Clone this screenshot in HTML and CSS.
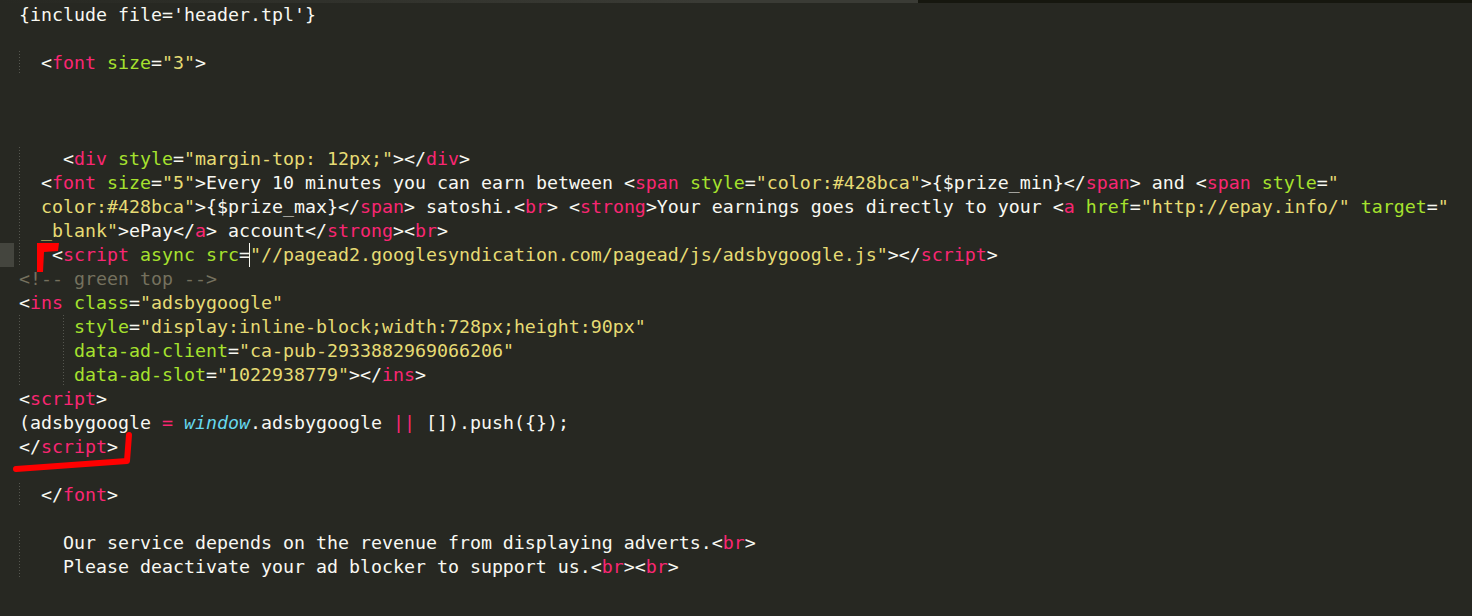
FILE: index.html
```html
<!DOCTYPE html>
<html>
<head>
<meta charset="utf-8">
<link rel="stylesheet" href="styles.css">
</head>
<body>
<div class="editor">
  <div class="topstrip"><div class="tab-edge"></div><div class="tab-dark"></div></div>
  <div class="view">
    <div class="gutter">
      <div class="gl"></div><div class="gl"></div><div class="gl"></div><div class="gl"></div><div class="gl"></div>
      <div class="gl"></div><div class="gl"></div><div class="gl"></div><div class="gl"></div><div class="gl"></div>
      <div class="gl cur"></div><div class="gl"></div><div class="gl"></div><div class="gl"></div><div class="gl"></div>
    </div>
    <div class="code">
<div class="ln">{include file='header.tpl'}</div>
<div class="ln"><span class="g"></span></div>
<div class="ln"><span class="g">  </span>&lt;<span class="t">font</span> <span class="a">size</span>=<span class="s">"3"</span>&gt;</div>
<div class="ln"><span class="g"></span></div>
<div class="ln"><span class="g"></span></div>
<div class="ln"><span class="g"></span></div>
<div class="ln"><span class="g">    </span>&lt;<span class="t">div</span> <span class="a">style</span>=<span class="s">"margin-top: 12px;"</span>&gt;&lt;/<span class="t">div</span>&gt;</div>
<div class="ln"><span class="g">  </span>&lt;<span class="t">font</span> <span class="a">size</span>=<span class="s">"5"</span>&gt;Every 10 minutes you can earn between &lt;<span class="t">span</span> <span class="a">style</span>=<span class="s">"color:#428bca"</span>&gt;{$prize_min}&lt;/<span class="t">span</span>&gt; and &lt;<span class="t">span</span> <span class="a">style</span>=<span class="s">"</span></div>
<div class="ln"><span class="g">  </span><span class="s">color:#428bca"</span>&gt;{$prize_max}&lt;/<span class="t">span</span>&gt; satoshi.&lt;<span class="t">br</span>&gt; &lt;<span class="t">strong</span>&gt;Your earnings goes directly to your &lt;<span class="t">a</span> <span class="a">href</span>=<span class="s">"http://epay.info/"</span> <span class="a">target</span>=<span class="s">"</span></div>
<div class="ln"><span class="g">  </span><span class="s">_blank"</span>&gt;ePay&lt;/<span class="t">a</span>&gt; account&lt;/<span class="t">strong</span>&gt;&lt;<span class="t">br</span>&gt;</div>
<div class="ln"><span class="g">   </span>&lt;<span class="t">script</span> <span class="a">async</span> <span class="a">src</span>=<span class="caret"></span><span class="s">"//pagead2.googlesyndication.com/pagead/js/adsbygoogle.js"</span>&gt;&lt;/<span class="t">script</span>&gt;</div>
<div class="ln"><span class="c">&lt;!-- green top --&gt;</span></div>
<div class="ln">&lt;<span class="t">ins</span> <span class="a">class</span>=<span class="s">"adsbygoogle"</span></div>
<div class="ln"><span class="g">    </span><span class="g"> </span><span class="a">style</span>=<span class="s">"display:inline-block;width:728px;height:90px"</span></div>
<div class="ln"><span class="g">    </span><span class="g"> </span><span class="a">data-ad-client</span>=<span class="s">"ca-pub-2933882969066206"</span></div>
<div class="ln"><span class="g">    </span><span class="g"> </span><span class="a">data-ad-slot</span>=<span class="s">"1022938779"</span>&gt;&lt;/<span class="t">ins</span>&gt;</div>
<div class="ln">&lt;<span class="t">script</span>&gt;</div>
<div class="ln">(adsbygoogle <span class="t">=</span> <span class="w">window</span>.adsbygoogle <span class="t">||</span> []).push({});</div>
<div class="ln">&lt;/<span class="t">script</span>&gt;</div>
<div class="ln"><span class="g"></span></div>
<div class="ln"><span class="g">  </span>&lt;/<span class="t">font</span>&gt;</div>
<div class="ln"><span class="g"></span></div>
<div class="ln"><span class="g">    </span>Our service depends on the revenue from displaying adverts.&lt;<span class="t">br</span>&gt;</div>
<div class="ln"><span class="g">    </span>Please deactivate your ad blocker to support us.&lt;<span class="t">br</span>&gt;&lt;<span class="t">br</span>&gt;</div>
<div class="ln"><span class="g"></span></div>
    </div>
  </div>
  <svg class="marks" width="1472" height="616" viewBox="0 0 1472 616">
    <polygon points="37,243 59,243 58,251 44,252 43,272 37,272" fill="#ff0000"/>
    <path d="M16 469 Q 60 466 127 461 L 129 435" fill="none" stroke="#ff0000" stroke-width="6" stroke-linecap="round" stroke-linejoin="round"/>
  </svg>
</div>
</body>
</html>
```
FILE: styles.css
```css
html, body {
  margin: 0;
  padding: 0;
  background: #272822;
}
.editor {
  position: relative;
  width: 1472px;
  height: 616px;
  overflow: hidden;
  background: #272822;
}
.topstrip {
  display: flex;
  height: 3px;
}
.tab-edge {
  width: 918px;
  background: linear-gradient(to right, #272822 0, #30312b 320px, #3a3b35 700px, #3a3b35 918px);
}
.tab-dark {
  flex: 1;
  background: #16170f;
}
.view {
  display: flex;
}
.gutter {
  width: 14px;
  flex: none;
}
.gl {
  height: 24px;
}
.gl.cur {
  background: #44453e;
}
.code {
  padding-left: 5px;
  font-family: "DejaVu Sans Mono", "Liberation Mono", monospace;
  font-size: 18.27px;
  color: #f8f8f2;
}
.ln {
  height: 24px;
  line-height: 24px;
  white-space: pre;
}
.g {
  display: inline-block;
  height: 24px;
  vertical-align: top;
  background-image: repeating-linear-gradient(to bottom, #55564f 0, #55564f 1px, transparent 1px, transparent 3px);
  background-size: 1px 100%;
  background-repeat: no-repeat;
  background-position: 0 0;
}
.t { color: #f92672; }
.a { color: #a6e22e; }
.s { color: #e6db74; }
.c { color: #75715e; }
.w { color: #66d9ef; font-style: italic; }
.caret {
  display: inline-block;
  width: 0;
  height: 24px;
  vertical-align: top;
  border-left: 1px solid #f8f8f0;
  margin-left: -1px;
}
.marks {
  position: absolute;
  left: 0;
  top: 0;
  pointer-events: none;
}
```
